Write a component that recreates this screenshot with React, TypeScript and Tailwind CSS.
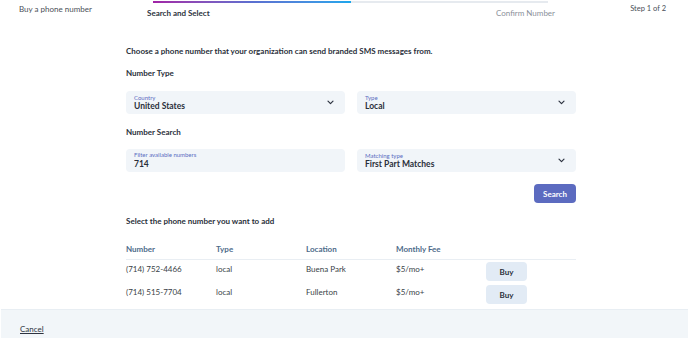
import {ChangeEvent, useState} from "react";

interface PhoneRow {
    number: string;
    type: string;
    location: string;
    fee: string;
}

const rows: PhoneRow[] = [
    {number: "(714) 752-4466", type: "local", location: "Buena Park", fee: "$5/mo+"},
    {number: "(714) 515-7704", type: "local", location: "Fullerton", fee: "$5/mo+"},
];

const Chevron = () => (
    <svg width="7" height="5" viewBox="0 0 7 5" fill="none" className="shrink-0">
        <path d="M1 1.2l2.5 2.5 2.5-2.5" stroke="#2d3340" strokeWidth="1.2" strokeLinecap="round" strokeLinejoin="round"/>
    </svg>
);

interface FieldProps {
    label: string;
    value: string;
    select?: boolean;
    onChange?: (v: string) => void;
}

const Field = ({label, value, select, onChange}: FieldProps) => (
    <div className="flex-1 h-[23px] bg-[#f1f5f9] rounded-[4px] flex items-center pl-[8px] pr-[11px]">
        <div className="flex-1 flex flex-col leading-none">
            <span className="text-[6px] text-[#5b6cc2] mb-[1.5px]">{label}</span>
            {select ? (
                <span className="text-[8.5px] font-bold text-[#2a2f3a]">{value}</span>
            ) : (
                <input
                    value={value}
                    onChange={(e: ChangeEvent<HTMLInputElement>) => onChange?.(e.target.value)}
                    className="text-[8.5px] font-bold text-[#2a2f3a] bg-transparent outline-none p-0 leading-none"
                />
            )}
        </div>
        {select && <Chevron/>}
    </div>
);

export default function App() {
    const [filter, setFilter] = useState("714");

    return (
        <div
            className="h-[338px] w-full flex flex-col overflow-hidden bg-white text-[#2a2f3a]"
            style={{fontFamily: "Lato, 'Liberation Sans', Arial, sans-serif"}}
        >
            {/* header + stepper */}
            <div className="flex h-[22px] shrink-0">
                <div className="w-[147px] pl-[19px] pt-[3px] text-[8px] text-[#4a4f57]">Buy a phone number</div>
                <div className="w-[408px] flex flex-col">
                    <div className="ml-[6px] w-[395px] h-[2px] mt-[1px] bg-[#e6eaef] flex">
                        <div className="w-[198px] h-full bg-gradient-to-r from-[#a021a6] via-[#5a6fd0] to-[#19a6ec]"/>
                    </div>
                    <div className="flex justify-between mt-[6px] text-[8px] leading-none">
                        <span className="font-bold text-[#2d3340]">Search and Select</span>
                        <span className="text-[#8a9099]">Confirm Number</span>
                    </div>
                </div>
                <div className="flex-1 text-right pr-[22px] pt-[3px] text-[7.5px] text-[#4a4f57]">Step 1 of 2</div>
            </div>

            {/* main */}
            <div className="flex-1 overflow-hidden">
                <div className="ml-[126px] w-[450px]">
                    <p className="mt-[25px] text-[8px] font-bold leading-none">
                        Choose a phone number that your organization can send branded SMS messages from.
                    </p>

                    <h3 className="mt-[14px] text-[8px] font-bold leading-none">Number Type</h3>
                    <div className="mt-[14px] flex gap-[12px]">
                        <Field label="Country" value="United States" select/>
                        <Field label="Type" value="Local" select/>
                    </div>

                    <h3 className="mt-[14px] text-[8px] font-bold leading-none">Number Search</h3>
                    <div className="mt-[13px] flex gap-[12px]">
                        <Field label="Filter available numbers" value={filter} onChange={setFilter}/>
                        <Field label="Matching type" value="First Part Matches" select/>
                    </div>

                    <div className="mt-[12px] flex justify-end">
                        <button className="w-[42px] h-[19px] rounded-[4px] bg-[#5c6bc0] text-white text-[8px] font-bold">
                            Search
                        </button>
                    </div>

                    <h3 className="mt-[14px] text-[8px] font-bold leading-none">Select the phone number you want to add</h3>

                    <div className="mt-[20px] w-[450px]">
                        <div className="grid grid-cols-[90px_90px_90px_90px_90px] text-[8px] font-bold text-[#4d6b8a] pb-[6px] border-b border-[#e9eef3] leading-none">
                            <span>Number</span>
                            <span>Type</span>
                            <span>Location</span>
                            <span>Monthly Fee</span>
                            <span/>
                        </div>
                        {rows.map(r => (
                            <div key={r.number}
                                 className="grid grid-cols-[90px_90px_90px_90px_90px] items-start text-[8px] text-[#3a3f47] h-[23px] pt-[3px]">
                                <span>{r.number}</span>
                                <span>{r.type}</span>
                                <span>{r.location}</span>
                                <span>{r.fee}</span>
                                <button
                                    className="w-[41px] h-[19px] -mt-[1px] rounded-[4px] bg-[#e2ebf5] text-[8px] font-bold text-[#2a2f3a]">
                                    Buy
                                </button>
                            </div>
                        ))}
                    </div>
                </div>
            </div>

            {/* footer */}
            <div className="h-[29px] shrink-0 ml-[1px] bg-[#f2f6f9] border-t border-[#e8eef3] flex items-end pl-[19px] pb-[3px]">
                <button className="text-[8px] text-[#2d3340] underline">Cancel</button>
            </div>
        </div>
    );
}
